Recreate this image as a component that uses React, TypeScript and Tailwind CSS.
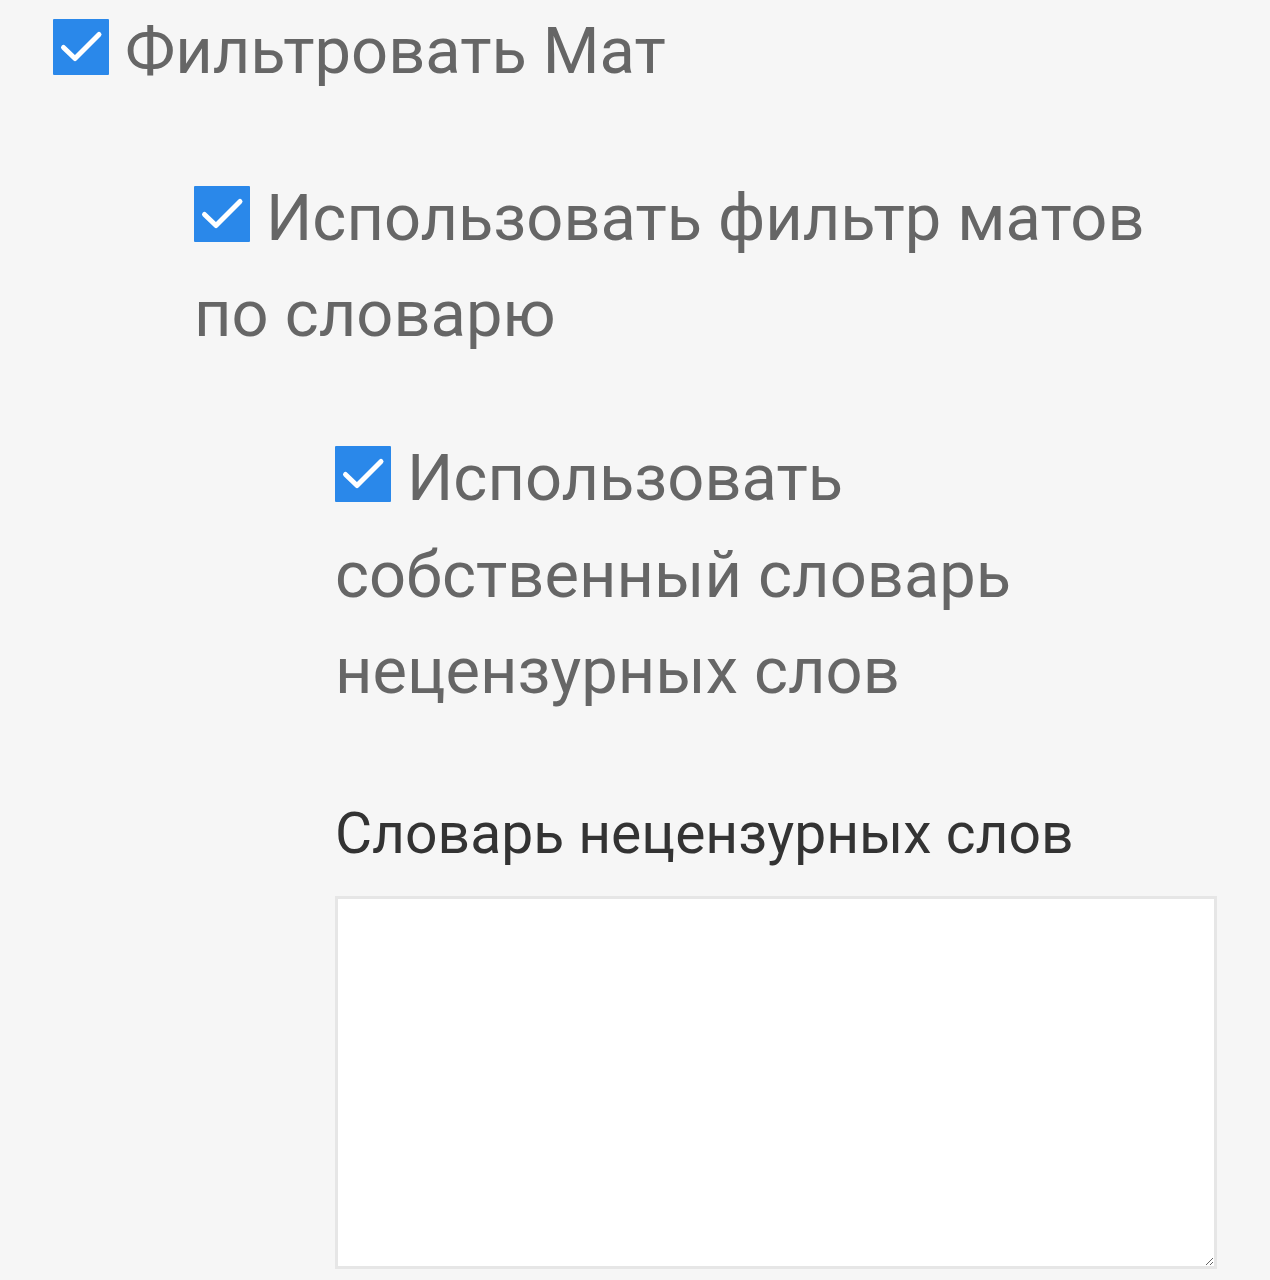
function Check() {
  return (
    <span className="inline-block w-[56px] h-[56px] mr-4 align-[-2px] bg-[#2a88ea] rounded-[1px]">
      <svg viewBox="0 0 56 56" className="w-[56px] h-[56px]" fill="none" stroke="#fff" strokeWidth="5" strokeLinecap="round" strokeLinejoin="round">
        <path d="M10.5 28.5L22 39.5L46 15.5" />
      </svg>
    </span>
  );
}

export default function App() {
  return (
    <div className="min-h-[1280px] bg-[#f6f6f6] px-[53px] pt-[3px] font-['Roboto',sans-serif] text-[#666]">
      {/* Filter toggle */}
      <p className="text-[65px] leading-[96px]">
        <Check />
        Фильтровать Мат
      </p>

      <div className="ml-[141px] mt-[71px]">
        <p className="text-[65px] leading-[96px]">
          <Check />
          Использовать фильтр матов по словарю
        </p>

        <div className="ml-[141px] mt-[68px]">
          <p className="text-[65px] leading-[96.5px]">
            <Check />
            Использовать собственный словарь нецензурных слов
          </p>

          <label className="block mt-[82px] text-[57px] leading-[64px] text-[#333]">
            Словарь нецензурных слов
          </label>
          <textarea className="block mt-[30px] w-full h-[373px] bg-white border-[3px] border-[#e6e6e6] outline-none" />
        </div>
      </div>
    </div>
  );
}
